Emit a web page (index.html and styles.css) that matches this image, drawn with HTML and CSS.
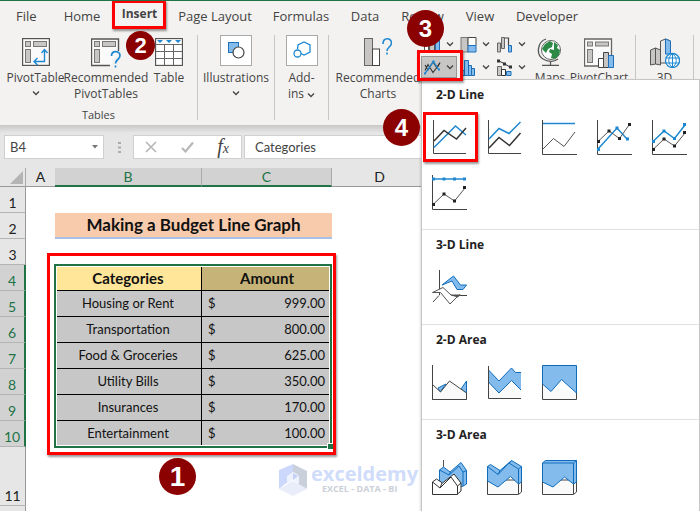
FILE: index.html
```html
<!DOCTYPE html>
<html lang="en">
<head>
<meta charset="utf-8">
<title>Making a Budget Line Graph</title>
<link rel="stylesheet" href="styles.css">
</head>
<body>
<div class="app">
  <nav class="tabs">
    <a href="#">File</a>
    <a href="#">Home</a>
    <a href="#" class="active">Insert<span class="frame frame-tab"></span></a>
    <a href="#">Page Layout</a>
    <a href="#">Formulas</a>
    <a href="#">Data</a>
    <a href="#">Review</a>
    <a href="#">View</a>
    <a href="#">Developer</a>
  </nav>

  <div class="ribbon">
    <section class="group tables">
      <div class="tools">
        <button class="tool">
          <svg width="28" height="28" viewBox="0 0 28 28"><rect x=".5" y=".5" width="27" height="27" fill="#fafafa" stroke="#555" stroke-width="1.4"/><g fill="#c8c6c4" stroke="#797775"><rect x="3.5" y="3.5" width="5" height="5"/><rect x="11.500" y="3.500" width="13" height="5"/><rect x="3.500" y="11.500" width="5" height="13"/></g><path d="M22.500 12v11.500h-10M19.500 15l3-3.500 3 3.500M15.500 20l-3.500 3.500 3.500 3.500" fill="none" stroke="#1e88d2" stroke-width="1.400"/></svg>
          <span>PivotTable</span>
          <svg class="caret" width="8" height="6" viewBox="0 0 8 6"><path d="M1 1.500l3 3 3-3"/></svg>
        </button>
        <button class="tool">
          <svg class="shift" width="30" height="30" viewBox="0 0 30 30"><path d="M27.500 13V1H.5v26.500H19" fill="#fafafa" stroke="#555" stroke-width="1.400"/><g fill="#c8c6c4" stroke="#797775"><rect x="3.500" y="3.500" width="5" height="5"/><rect x="11.500" y="3.500" width="13" height="5"/><rect x="3.500" y="11.500" width="5" height="13"/></g><path d="M20.500 18c0-6 8.500-5.500 8.500-.5 0 4-4.500 4-4.500 8M24.500 27.500v2" fill="none" stroke="#1e88d2" stroke-width="1.700"/></svg>
          <span>Recommended<br>PivotTables</span>
        </button>
        <button class="tool">
          <svg width="28" height="28" viewBox="0 0 28 28"><rect x=".5" y=".5" width="27" height="27" fill="#fff" stroke="#555" stroke-width="1.300"/><path d="M1 6.500h26M1 13.500h26M1 20.500h26M9.500 6v21M18.500 6v21" stroke="#666" fill="none"/><path d="M2 2h6l-3 3zM11 2h6l-3 3zM20 2h6l-3 3z" fill="#1e88d2"/></svg>
          <span>Table</span>
        </button>
      </div>
      <div class="caption">Tables</div>
      <b class="badge badge-2">2</b>
    </section>

    <section class="group">
      <button class="tool boxed">
        <svg width="32" height="31" viewBox="0 0 32 31"><rect x=".5" y=".5" width="31" height="30" fill="#fff" stroke="#aaa"/><rect x="8.500" y="7.500" width="10" height="10" fill="#83bcec" stroke="#1e6fb8"/><circle cx="18.500" cy="17.500" r="5.500" fill="#fff" stroke="#444" stroke-width="1.200"/></svg>
        <span>Illustrations</span>
        <svg class="caret" width="8" height="6" viewBox="0 0 8 6"><path d="M1 1.500l3 3 3-3"/></svg>
      </button>
    </section>

    <section class="group">
      <button class="tool boxed">
        <svg width="32" height="31" viewBox="0 0 32 31"><rect x=".5" y=".5" width="31" height="30" fill="#fff" stroke="#aaa"/><path d="M11.500 14l.5-4 6-3 6 3v7l-6 3-3-1.500" fill="none" stroke="#1e88d2" stroke-width="1.300"/><circle cx="11.500" cy="18.500" r="3.500" fill="#fff" stroke="#1e88d2" stroke-width="1.300"/></svg>
        <span>Add-<br>ins <svg class="caret" width="8" height="6" viewBox="0 0 8 6"><path d="M1 1.500l3 3 3-3"/></svg></span>
      </button>
    </section>

    <section class="group charts">
      <button class="tool">
        <svg width="28" height="28" viewBox="0 0 28 28"><rect x=".5" y=".5" width="8" height="27" fill="#c8c6c4" stroke="#666"/><rect x="8.500" y="11" width="7" height="16.500" fill="#fff" stroke="#444"/><path d="M19 6c0-7 8.500-6.500 8.500-1 0 4-4.500 4-4.500 8M23 14.500v2" fill="none" stroke="#1e88d2" stroke-width="1.600"/></svg>
        <span>Recommended<br>Charts</span>
      </button>

      <div class="chart-types">
        <button aria-label="Column chart"><svg width="17" height="17" viewBox="0 0 17 17"><rect x=".5" y="7.500" width="4" height="9" fill="#fff" stroke="#555"/><rect x="5.500" y="1.500" width="5" height="15" fill="#c8c6c4" stroke="#555"/><rect x="11.500" y="4.500" width="4" height="12" fill="#83bcec" stroke="#1e6fb8"/></svg><svg class="caret" width="8" height="6" viewBox="0 0 8 6"><path d="M1 1.500l3 3 3-3"/></svg></button>
        <button aria-label="Hierarchy chart"><svg width="17" height="17" viewBox="0 0 17 17"><rect x="1" y="1.500" width="7" height="14.500" fill="#c8c6c4" stroke="#777"/><path d="M8 1.500h8v8H8z" fill="#fff" stroke="#444"/><path d="M8 9.500h8V16H8z" fill="#83bcec" stroke="#1e6fb8"/></svg><svg class="caret" width="8" height="6" viewBox="0 0 8 6"><path d="M1 1.500l3 3 3-3"/></svg></button>
        <button aria-label="Waterfall chart"><svg width="17" height="17" viewBox="0 0 17 17"><path d="M1.500 7h3v9h-3zM5.500 1.500h3v11h-3z" fill="#c8c6c4" stroke="#666"/><path d="M8.500 2h4v8" fill="none" stroke="#444" stroke-width="1.200"/><path d="M12.500 9.500h3V16h-3z" fill="#83bcec" stroke="#1e6fb8"/></svg><svg class="caret" width="8" height="6" viewBox="0 0 8 6"><path d="M1 1.500l3 3 3-3"/></svg></button>

        <div class="dropdown">
          <button class="pressed" aria-label="Line chart"><svg width="17" height="17" viewBox="0 0 17 17"><path d="M1 6l3 5 5-8 4 6 3-5M1 11.500l3-6 5 8 3-4 4-6" fill="none" stroke="#333" stroke-width="1.100"/><path d="M1 14.500L9.500 2.500l5 8" fill="none" stroke="#1e88d2" stroke-width="1.300"/><path d="M0 13.500h2v2H0zM8.500 1.500h2v2h-2zM14 9.500h2v2h-2z" fill="#1e88d2"/></svg><svg class="caret" width="8" height="6" viewBox="0 0 8 6"><path d="M1 1.500l3 3 3-3"/></svg></button>

          <div class="menu">
            <section>
              <h2>2-D Line</h2>
              <div class="options">
                <button aria-label="Line"><svg width="35" height="35" viewBox="0 0 35 35"><path class="axis" d="M1.500 0v33.500H34"/><path class="blue" d="M2 27.500L23.500 6 34 15"/><path class="ink" d="M2 21l10-10.500 12.500 8.500L34 8"/></svg><span class="frame frame-option"></span></button>
                <button aria-label="Stacked line"><svg width="35" height="35" viewBox="0 0 35 35"><path class="axis" d="M1.500 0v33.500H34"/><path class="blue" d="M2 19L12 8.500l10 5L33.500 2"/><path class="ink" d="M2 28l10-10.500 10.500 8L33.500 13"/></svg></button>
                <button aria-label="100% stacked line"><svg width="35" height="35" viewBox="0 0 35 35"><path class="axis" d="M.5 0v34.500H35"/><path class="blue" d="M1 3.500h32"/><path class="thin" d="M1 29l10.500-10.500 10.500 8L33 12"/></svg></button>
                <button aria-label="Line with markers"><svg width="35" height="35" viewBox="0 0 35 35"><path class="axis" d="M.5 0v34.500H35"/><path class="blue" d="M1 29L20 8l10 11"/><path class="thin" d="M1 21.500L12 11l10.500 7.500L32 5"/><path d="M0 20h3v3H0zM10.500 9.500h3v3h-3zM21 17h3v3h-3zM31 3h3v3h-3z" fill="#222"/><path d="M0 28h3v3H0zM18.500 6.500h3v3h-3zM29 17.500h3v3h-3z" fill="#1e88d2"/></svg></button>
                <button aria-label="Stacked line with markers"><svg width="35" height="35" viewBox="0 0 35 35"><path class="axis" d="M.5 0v34.500H35"/><path class="blue" d="M1 21.500L12 11l10.500 7.500L33 5"/><path class="thin" d="M1 29.500L12 19l10.500 7L33 13"/><path d="M0 20h3v3H0zM10.500 9.500h3v3h-3zM21 17h3v3h-3zM31 3h3v3h-3z" fill="#1e88d2"/><path d="M0 28h3v3H0zM10.500 17.500h3v3h-3zM21 24.500h3v3h-3zM31 11h3v3h-3z" fill="#222"/></svg></button>
                <button aria-label="100% stacked line with markers"><svg width="35" height="35" viewBox="0 0 35 35"><path class="axis" d="M.5 0v34.500H35"/><path class="blue" d="M1 4h32"/><path class="thin" d="M1 29.500L12 19l10.500 7L33 13"/><path d="M0 2.500h3v3H0zM10.500 2.500h3v3h-3zM21 2.500h3v3h-3zM31 2.500h3v3h-3z" fill="#1e88d2"/><path d="M0 28h3v3H0zM10.500 17.500h3v3h-3zM21 24.500h3v3h-3zM31 11h3v3h-3z" fill="#222"/></svg></button>
              </div>
            </section>
            <section>
              <h2>3-D Line</h2>
              <div class="options">
                <button aria-label="3-D line"><svg width="35" height="35" viewBox="0 0 35 35"><path class="axis" d="M7.500 0v25M18 25.500h17M7 25.500L1 32"/><path class="area" d="M10 15l11.500-9 7 9h6l-3.500 4.500h-6L20 11z"/><path d="M.5 22.500L11 17.500l8 7.500h8l-9 9-9.500-11.500zM19 25l7 2 2-3" fill="#fff" stroke="#555"/></svg></button>
              </div>
            </section>
            <section>
              <h2>2-D Area</h2>
              <div class="options">
                <button aria-label="Area"><svg width="35" height="35" viewBox="0 0 35 35"><path class="area" d="M6 23l8-4-6 8zM29 24l5.500-8v12z"/><path d="M.5 19.500l8 7.500 9-11 17 12v6.500H.5z" fill="#fafafa" stroke="#444"/><path class="axis" d="M.5 0v34.500h34"/></svg></button>
                <button aria-label="Stacked area"><svg width="35" height="35" viewBox="0 0 35 35"><path d="M1.500 17l10.500 11L24.500 15.500 34 25v8.500H1.500z" fill="#fafafa"/><path d="M1.500 5l10.500 11L24.500 3l4 4.500H34V25l-9.500-9.500L12 28 1.500 17z" fill="#83bcec"/><path class="edge" d="M1.500 5l10.500 11L24.500 3l4 4.500H34M1.500 17l10.500 11L24.500 15.500 34 25"/><path class="axis" d="M1.500 1v32.500H34"/></svg></button>
                <button aria-label="100% stacked area"><svg width="35" height="35" viewBox="0 0 35 35"><path d="M.5 19v15.500h34V28" fill="#fafafa" stroke="#444"/><path class="area" d="M.5.5h34V28L19.500 14.500 9 26.500.5 19z"/></svg></button>
              </div>
            </section>
            <section>
              <h2>3-D Area</h2>
              <div class="options">
                <button aria-label="3-D area"><svg width="35" height="35" viewBox="0 0 35 35"><path d="M11.500 0v7" stroke="#555"/><path class="area" d="M7.500 10l4-3 6.500 5L29 2.500l5.500 8V24l-4 2.500h-23z"/><path class="edge" d="M7.500 10l9.500 5 10-9 4 6v14M31 12l3.500-1.500M17 15l1.500-3"/><path d="M.5 22l4-3 6 4L22 14l7 9v8l-4 3.500H.5z" fill="#fff" stroke="#333"/><path d="M.5 22l7.500 6 11-11 6.500 9v8.500M25.500 26l3.500-3M8 28l2-5" fill="none" stroke="#333"/></svg></button>
                <button aria-label="3-D stacked area"><svg width="35" height="35" viewBox="0 0 35 35"><path d="M.5 20v14.500h31l3-2.500V20z" fill="#fafafa" stroke="#444"/><path class="area" d="M.5 6.500l3-2 9.500 6L24.500.5l10 6V22l-3 2-8-7.500L11 27 .5 21z"/><path class="edge" d="M.5 6.500l10.500 8 11-11.500 9.500 6V24M31.500 9l3-2.500M11 14.500l2-4M22 3l2.500-2"/><path d="M31.500 24v10" stroke="#444"/></svg></button>
                <button aria-label="3-D 100% stacked area"><svg width="35" height="35" viewBox="0 0 35 35"><path d="M.5 20v14.500h31l3-2.500V20z" fill="#fafafa" stroke="#444"/><path class="area" d="M.5 3l3-2.500h31V22l-3 2-9-7L11 27 .5 22z"/><path class="edge" d="M.5 3h31v21M31.500 3l3-2.500"/><path d="M31.500 24v10" stroke="#444"/></svg></button>
              </div>
            </section>
          </div>
          <span class="frame frame-button"></span>
          <b class="badge badge-3">3</b>
          <b class="badge badge-4">4</b>
        </div>
        <button aria-label="Statistic chart"><svg width="17" height="17" viewBox="0 0 17 17"><path d="M1.500 16.500v-5h3v5zM4.500 16.500v-15h4v15zM8.500 16.500v-10h3v10zM11.500 16.500v-7h3v7z" fill="#83bcec" stroke="#1e6fb8"/></svg><svg class="caret" width="8" height="6" viewBox="0 0 8 6"><path d="M1 1.500l3 3 3-3"/></svg></button>
        <button aria-label="Combo chart"><svg width="17" height="17" viewBox="0 0 17 17"><path d="M1.500 7.500h4v9h-4z" fill="#c8c6c4" stroke="#666"/><path d="M5.500 10.500h4v6h-4z" fill="#fff" stroke="#333"/><path d="M10.500 12.500h4.500v4h-4.500z" fill="#83bcec" stroke="#1e6fb8"/><path d="M2 1.500l6 3 6 3.500" stroke="#333" fill="none"/><path d="M1 .5h3v3H1zM7 3.500h3v3H7zM13 6.500h3v3h-3z" fill="#333"/></svg><svg class="caret" width="8" height="6" viewBox="0 0 8 6"><path d="M1 1.500l3 3 3-3"/></svg></button>
      </div>

      <button class="tool maps">
        <svg width="26" height="28" viewBox="0 0 26 28"><circle cx="14" cy="12" r="9.500" fill="#fff" stroke="#666"/><path d="M8 6l5-3 3 2-1 4-4 2-2 4-4-4zM17 4l4 3-1 3 3 2-1 5-4 4-4-1 1-4-3-2 1-3 4 1z" fill="#2c8a46"/><path d="M9 1C0 4-1 17 6 21c5 3 11 3 15 0M13.500 23v4M5 27.500h17" fill="none" stroke="#555" stroke-width="1.300"/></svg>
        <span>Maps</span>
      </button>
      <button class="tool pivot-chart">
        <svg width="30" height="30" viewBox="0 0 30 30"><path d="M.5 1h27v27H.5z" fill="#fafafa" stroke="#666" stroke-width="1.300"/><g fill="#c8c6c4" stroke="#797775"><rect x="3.500" y="4" width="5" height="4"/><rect x="11.500" y="4" width="13" height="4"/><rect x="3.500" y="11.500" width="5" height="13"/></g><path d="M14.500 20.500h5v9h-5z" fill="#fff" stroke="#444"/><path d="M19.500 14.500h5v15h-5z" fill="#c8c6c4" stroke="#444"/><path d="M24.500 17.500h5v12h-5z" fill="#83bcec" stroke="#1e6fb8"/></svg>
        <span>PivotChart</span>
      </button>
    </section>

    <section class="group tours">
      <button class="tool">
        <svg width="30" height="30" viewBox="0 0 30 30"><path d="M.5 12l5-2 5 2v15l-5-1-5 1z" fill="#c8c6c4" stroke="#555"/><path d="M5.500 10v16" stroke="#555"/><path d="M10.500 3l5-2 5 2v13l-4 9h-6z" fill="#e8e8e8" stroke="#555"/><path d="M15.500 1l5 2v13h-5z" fill="#83bcec" stroke="#1e6fb8"/><circle cx="22.500" cy="22.500" r="7" fill="#fff" stroke="#1e88d2" stroke-width="1.300"/><path d="M15.500 20h14M15.500 25h14M22.500 15.500v14M22.500 15.500c-5 4-5 10 0 14M22.500 15.500c5 4 5 10 0 14" fill="none" stroke="#1e88d2"/></svg>
        <span>3D</span>
      </button>
    </section>
  </div>

  <div class="formula-bar">
    <div class="name-box">
      <input type="text" value="B4" aria-label="Name box">
      <button aria-label="Named ranges"><svg width="6" height="4" viewBox="0 0 6 4"><path d="M0 0h6L3 3.500z" fill="#777"/></svg></button>
    </div>
    <svg class="grip" width="3" height="11" viewBox="0 0 3 11"><path d="M0 0h3v2H0zM0 4.500h3v2H0zM0 9h3v2H0z" fill="#aaa"/></svg>
    <div class="actions">
      <button aria-label="Cancel"><svg width="12" height="12" viewBox="0 0 12 12"><path d="M1 1l10 10M11 1L1 11" stroke="#b8b8b8" stroke-width="1.700"/></svg></button>
      <button aria-label="Enter"><svg width="13" height="12" viewBox="0 0 13 12"><path d="M1 7l3.500 3.500L12 1.500" fill="none" stroke="#b8b8b8" stroke-width="2.200"/></svg></button>
      <button class="fx" aria-label="Insert function">f<small>x</small></button>
    </div>
    <input class="formula" type="text" value="Categories" aria-label="Formula">
  </div>

  <main class="sheet">
    <table>
      <colgroup><col class="c-num"><col class="c-a"><col class="c-b"><col class="c-c"><col class="c-d"><col></colgroup>
      <thead>
        <tr><th class="corner"><svg width="13" height="13" viewBox="0 0 13 13"><path d="M13 0v13H0z" fill="#b4b4b4"/></svg></th><th>A</th><th class="on">B</th><th class="on">C</th><th>D</th><th></th></tr>
      </thead>
      <tbody>
        <tr><th>1</th><td></td><td></td><td></td><td></td><td></td></tr>
        <tr><th>2</th><td></td><td colspan="2" class="title">Making a Budget Line Graph</td><td></td><td></td></tr>
        <tr><th>3</th><td></td><td></td><td></td><td></td><td></td></tr>
        <tr class="head"><th>4</th><td></td><td class="cat">Categories</td><td class="amt">Amount</td><td></td><td></td></tr>
        <tr class="data"><th>5</th><td></td><td class="cat">Housing or Rent</td><td class="amt"><div><span>$</span><span>999.00</span></div></td><td></td><td></td></tr>
        <tr class="data"><th>6</th><td></td><td class="cat">Transportation</td><td class="amt"><div><span>$</span><span>800.00</span></div></td><td></td><td></td></tr>
        <tr class="data"><th>7</th><td></td><td class="cat">Food &amp; Groceries</td><td class="amt"><div><span>$</span><span>625.00</span></div></td><td></td><td></td></tr>
        <tr class="data"><th>8</th><td></td><td class="cat">Utility Bills</td><td class="amt"><div><span>$</span><span>350.00</span></div></td><td></td><td></td></tr>
        <tr class="data"><th>9</th><td></td><td class="cat">Insurances</td><td class="amt"><div><span>$</span><span>170.00</span></div></td><td></td><td></td></tr>
        <tr class="data"><th>10</th><td></td><td class="cat">Entertainment</td><td class="amt"><div><span>$</span><span>100.00</span></div></td><td></td><td></td></tr>
        <tr class="tall"><th>11</th><td></td><td></td><td></td><td></td><td></td></tr>
        <tr><th></th><td></td><td></td><td></td><td></td><td></td></tr>
      </tbody>
    </table>
    <span class="selection"></span>
    <span class="frame frame-range"></span>
    <b class="badge badge-1">1</b>
    <div class="watermark">
      <svg width="28" height="32" viewBox="0 0 28 32"><path d="M0 6L14 0v15L6 20l-6 5z" fill="#ccd8fb"/><path d="M14 0l14 7v18l-9-5v-9l-5-3z" fill="#c9d0dc"/><path d="M0 25l14-8 14 8-14 7z" fill="#e8edf9"/><path d="M14 8l6 4v8l-6-4-6 4v-8z" fill="#eef2fc"/><path d="M14 9l5 3-5 4z" fill="#c3d0f7"/></svg>
      <div><strong>exceldemy</strong><small>EXCEL - DATA - BI</small></div>
    </div>
  </main>
</div>
</body>
</html>
```
FILE: styles.css
```css
* { box-sizing: border-box; }
body { margin: 0; background: #fff; color: #444; font: 13px/16px "Open Sans", "Noto Sans", sans-serif; }
button { padding: 0; border: 0; background: none; color: inherit; font: inherit; }
input { min-width: 0; border: 0; padding: 0; background: #fff; color: #444; font: 13px/22px Lato, sans-serif; }
svg { display: block; flex: none; }
.app { position: relative; min-height: 100vh; overflow: hidden; border-top: 1px solid #217346; }

.tabs { display: grid; grid-template-columns: 25px 36px 33px 72px 54px 28px 41px 28px 60px; column-gap: 23px; height: 31px; padding-left: 16px; background: #f3f2f1; }
.tabs a { position: relative; display: flex; justify-content: center; align-items: center; height: 29px; color: #444; text-decoration: none; white-space: nowrap; }
.tabs a:first-child { justify-content: flex-start; }
.tabs .active { height: 28px; border-bottom: 2px solid #217346; font-size: 12px; font-weight: 700; }

.ribbon { display: grid; grid-template-columns: 198px 77px 54px 307px 58px 1fr; height: 93px; padding: 3px 0 1px; background: #f3f2f1; font-size: 12px; }
.group { position: relative; display: flex; flex-direction: column; margin-bottom: 4px; border-right: 1px solid #c8c6c4; }
.tools { display: flex; gap: 2px; padding-left: 7px; }
.tool { display: flex; flex-direction: column; align-items: center; width: 100%; padding-top: 3px; white-space: nowrap; }
.tool > svg:first-child { margin-bottom: 4px; }
.tool.boxed { padding-top: 0; }
.tables .tool { width: 57px; }
.tables .tool:nth-child(2) { width: 80px; }
.tables .tool:nth-child(3) { width: 42px; }
.tables .tool > .shift { margin-bottom: 2px; }
.caret { display: inline-block; fill: none; stroke: #444; stroke-width: 1.3px; }
.tool > .caret { margin-top: 4px; }
.caption { margin-top: auto; text-align: center; font-size: 11px; line-height: 10px; }
.charts { flex-direction: row; padding-left: 9px; }
.charts > .tool { width: 80px; flex: none; }
.chart-types { display: grid; grid-template-columns: repeat(3, 36px); grid-auto-rows: 22px; row-gap: 1px; margin: -2px 1px 0 3px; flex: none; align-content: start; }
.chart-types > button, .pressed { display: flex; align-items: center; gap: 5px; padding-left: 3px; }
.chart-types .pressed { width: 36px; height: 22px; padding-left: 2px; border: 1px solid #979593; background: #c8c6c4; }
.charts > .maps { width: 40px; }
.charts > .pivot-chart { width: 58px; }
.tool.pivot-chart > svg:first-child, .tours .tool > svg:first-child { margin-bottom: 2px; }

.dropdown { position: relative; }
.menu { position: absolute; z-index: 2; top: 23px; left: 0; width: 279px; border: 1px solid #c6c6c6; background: #fff; box-shadow: -1px 1px 2px #0002; color: #222; padding-bottom: 20px; }
.menu section { padding-bottom: 9px; border-bottom: 1px solid #e1e1e1; }
.menu section:last-child { border: 0; }
.menu h2 { margin: 0; padding-left: 14px; font-size: 12px; line-height: 30px; }
.options { display: grid; grid-template-columns: repeat(auto-fill, 55px); }
.options button { position: relative; height: 55px; padding: 10px; }
.axis { fill: none; stroke: #444; }
.ink { fill: none; stroke: #333; stroke-width: 1.5px; }
.thin { fill: none; stroke: #555; }
.blue { fill: none; stroke: #1e88d2; stroke-width: 1.5px; }
.area { fill: #83bcec; stroke: #0f6cbd; }
.edge { fill: none; stroke: #0f6cbd; }

.frame { position: absolute; z-index: 3; border: 3px solid #f00; box-shadow: 1px 2px 2px #0006; pointer-events: none; }
.frame-tab { inset: -1px -10px -2px -11px; }
.frame-button { top: -6px; left: -4px; width: 46px; height: 31px; }
.frame-option { top: 2px; left: 1px; width: 55px; height: 50px; }
.frame-range { top: 85px; left: 47px; width: 289px; height: 202px; }
.badge { position: absolute; z-index: 4; display: flex; align-items: center; justify-content: center; width: 37px; height: 37px; border-radius: 50%; background: #8b0000; color: #fff; font: 700 24px/1 "Liberation Sans", Arial, sans-serif; }
.badge-1 { top: 290px; left: 159px; font-size: 28px; }
.badge-2 { top: -4px; left: 126px; width: 29px; height: 29px; font-size: 22px; }
.badge-3 { top: -46px; left: -14px; }
.badge-4 { top: 53px; left: -38px; }

.formula-bar { display: flex; height: 43px; padding: 10px 0 9px 4px; background: linear-gradient(#c8c8c8, #e6e6e6 8px); }
.name-box, .actions, .formula { border: 1px solid #d0d0d0; background: #fff; }
.name-box { display: flex; width: 100px; padding: 0 5px; }
.name-box input { flex: 1; }
.grip { align-self: center; margin: 0 12px 0 14px; }
.actions { display: flex; align-items: center; justify-content: space-between; width: 109px; padding: 0 12px 0 11px; }
.fx { color: #444; font: italic 20px/20px "Liberation Serif", serif; }
.fx small { font-size: 14px; }
.formula { flex: 1; margin-left: 2px; padding-left: 10px; }

.sheet { position: relative; }
table { width: 100%; table-layout: fixed; border-spacing: 0; color: #111; font: 13px/16px Lato, sans-serif; }
.c-num { width: 26px; } .c-a { width: 29px; } .c-b { width: 147px; } .c-c { width: 130px; } .c-d { width: 95px; }
th { padding: 0; background: #e6e6e6; font-size: 14px; font-weight: 400; color: #222; }
td { padding: 0; }
thead th { height: 19px; border-bottom: 1px solid #999; }
thead .on { border-right: 1px solid #aaa; border-bottom: 2px solid #217346; background: #d2d2d2; color: #217346; }
.corner { border-right: 1px solid #aaa; }
.corner svg { margin: 0 0 0 10px; }
tbody tr { height: 26px; }
tbody th { padding-bottom: 1px; vertical-align: bottom; border-right: 1px solid #999; border-bottom: 1px solid #b4b4b4; }
.head th, .data th { border-right: 2px solid #217346; background: #d2d2d2; color: #217346; }
.tall { height: 59px; }
.title { border-bottom: 2px solid #a9c1e5; background: #f8cbad; text-align: center; font-size: 17px; font-weight: 700; }
.cat { border-right: 1px solid #000; border-bottom: 1px solid #000; text-align: center; }
.amt { border-bottom: 1px solid #000; }
.head .cat { background: #ffe699; }
.head .amt { background: #c6b377; text-align: center; }
.head td { font-size: 15px; font-weight: 700; }
.data .cat, .data .amt { padding-bottom: 2px; background: #c7c7c7; }
.amt div { display: flex; justify-content: space-between; padding: 0 7px 0 6px; }
.selection { position: absolute; top: 96px; left: 54px; width: 278px; height: 184px; border: 2px solid #217346; box-shadow: inset 0 0 0 1px #fff; }
.selection::after { content: ""; position: absolute; right: -3px; bottom: -3px; width: 5px; height: 5px; border: solid #fff; border-width: 1px 0 0 1px; background: #217346; }
.watermark { position: absolute; top: 296px; left: 279px; display: flex; gap: 4px; color: #cfdcfa; font-family: "Open Sans", sans-serif; }
.watermark strong { display: block; font-size: 20px; line-height: 20px; }
.watermark small { display: block; padding-left: 11px; color: #ccd0d8; font-size: 9px; line-height: 10px; font-weight: 700; }
```
